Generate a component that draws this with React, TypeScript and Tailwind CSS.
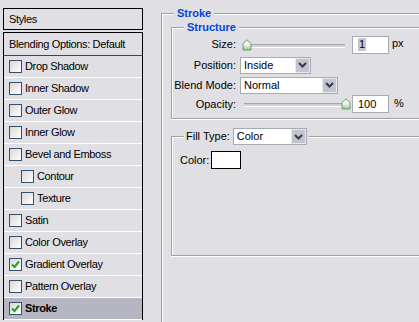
const FONT = "font-['Liberation_Sans',Arial,sans-serif]";

const STYLES = [
  { label: "Drop Shadow" },
  { label: "Inner Shadow" },
  { label: "Outer Glow" },
  { label: "Inner Glow" },
  { label: "Bevel and Emboss" },
  { label: "Contour", indent: true },
  { label: "Texture", indent: true },
  { label: "Satin" },
  { label: "Color Overlay" },
  { label: "Gradient Overlay", checked: true },
  { label: "Pattern Overlay" },
  { label: "Stroke", checked: true, selected: true },
];

function Check({ checked }: { checked?: boolean }) {
  return (
    <span className="flex h-[13px] w-[13px] shrink-0 items-center justify-center border border-[#34506c] bg-gradient-to-br from-[#d8d8d4] to-white">
      {checked && (
        <svg width="9" height="9" viewBox="0 0 9 9">
          <path d="M1 4.5 L3.5 7 L8 1.5" fill="none" stroke="#21a121" strokeWidth="2" />
        </svg>
      )}
    </span>
  );
}

function Arrow() {
  return (
    <span className="flex h-[15px] w-[15px] items-center justify-center border border-[#e8e8ee] bg-[#c4c4ce]">
      <svg width="9" height="6" viewBox="0 0 9 6">
        <path d="M1 1 L4.5 4.5 L8 1" fill="none" stroke="#2d3a55" strokeWidth="2" />
      </svg>
    </span>
  );
}

function Select({ value, className }: { value: string; className: string }) {
  return (
    <div className={`flex h-[17px] items-center justify-between border border-[#a5acb5] bg-white pl-[3px] ${className}`}>
      <span>{value}</span>
      <Arrow />
    </div>
  );
}

function Thumb() {
  return (
    <svg width="10" height="12" viewBox="0 0 10 12">
      <defs>
        <linearGradient id="tg" x1="0" y1="0" x2="0" y2="1">
          <stop offset="0" stopColor="#ffffff" />
          <stop offset="0.55" stopColor="#e6f2e6" />
          <stop offset="1" stopColor="#7fcf7f" />
        </linearGradient>
      </defs>
      <path d="M1 4.5 L5 0.8 L9 4.5 V11 H1 Z" fill="url(#tg)" stroke="#7c8f7c" strokeWidth="1" />
    </svg>
  );
}

function Slider({ pct }: { pct: number }) {
  return (
    <div className="relative h-[12px] w-[106px]">
      <div className="absolute left-[4px] right-[1px] top-[5px] h-[3px] border-t border-[#a8a8b0] bg-[#d0d0d6] shadow-[0_1px_0_#fff]" />
      <div className="absolute top-0" style={{ left: `${Math.round(pct * 99) + 2}px` }}>
        <Thumb />
      </div>
    </div>
  );
}

function NumBox({ children }: { children: React.ReactNode }) {
  return (
    <div className="ml-[6px] flex h-[18px] w-[37px] items-center border border-[#a5acb5] bg-white pl-[5px]">
      {children}
    </div>
  );
}

export default function App() {
  return (
    <div className={`flex h-[322px] w-[419px] overflow-hidden bg-[#e0dfe3] text-[11px] leading-[13px] text-black ${FONT}`}>
      {/* Styles list */}
      <div className="w-[143px] shrink-0 pl-[3px] pt-[8px] tracking-[-0.35px]">
        <div className="flex h-[22px] items-center border border-black pl-[5px]">Styles</div>
        <div className="mt-[2px] border-x border-t border-black">
          <div className="flex h-[23px] items-center border-b border-[#444] pl-[5px]">Blending Options: Default</div>
          {STYLES.map((s) => (
            <div
              key={s.label}
              className={`flex h-[22px] items-center border-b border-white ${s.indent ? "pl-[17px]" : "pl-[5px]"} ${
                s.selected ? "bg-[#b6b6c2] font-bold" : ""
              }`}
            >
              <Check checked={s.checked} />
              <span className="ml-[3px]">{s.label}</span>
            </div>
          ))}
        </div>
      </div>

      {/* Stroke settings */}
      <div className="ml-[18px] flex-1 pt-[7px]">
        <fieldset className="h-[330px] border-l border-t border-[#a0a0a0] shadow-[inset_1px_1px_0_#fff]">
          <legend className="ml-3 bg-[#e0dfe3] px-[3px] font-bold text-[#0046d5]">Stroke</legend>

          <fieldset className="ml-[9px] mt-px border-y border-l border-[#a0a0a0] pb-[5px] shadow-[inset_1px_1px_0_#fff,0_1px_0_#fff]">
            <legend className="ml-3 bg-[#e0dfe3] px-[3px] font-bold text-[#0046d5]">Structure</legend>
            <div className="flex h-[21px] items-center">
              <span className="w-[64px] text-right">Size:</span>
              <span className="ml-[4px] flex">
                <Slider pct={0} />
              </span>
              <NumBox>
                <span className="bg-[#c6c6ce] px-px">1</span>
              </NumBox>
              <span className="ml-[3px] -mt-[2px]">px</span>
            </div>
            <div className="flex h-[20px] items-center">
              <span className="w-[64px] text-right">Position:</span>
              <Select value="Inside" className="ml-[4px] w-[71px]" />
            </div>
            <div className="flex h-[20px] items-center">
              <span className="w-[64px] text-right">Blend Mode:</span>
              <Select value="Normal" className="ml-[4px] w-[98px]" />
            </div>
            <div className="flex h-[18px] items-center">
              <span className="w-[64px] text-right">Opacity:</span>
              <span className="ml-[4px] flex">
                <Slider pct={1} />
              </span>
              <NumBox>100</NumBox>
              <span className="ml-[5px] -mt-[2px]">%</span>
            </div>
          </fieldset>

          <fieldset className="ml-[9px] mt-[9px] border-y border-l border-[#a0a0a0] pb-[86px] pt-[6px] shadow-[inset_1px_1px_0_#fff,0_1px_0_#fff]">
            <legend className="ml-3 bg-[#e0dfe3] px-[2px]">
              <div className="flex items-center">
                <span className="mr-[3px]">Fill Type:</span>
                <Select value="Color" className="w-[74px]" />
              </div>
            </legend>
            <div className="flex h-[18px] items-center pl-[8px]">
              <span>Color:</span>
              <span className="ml-[2px] h-[18px] w-[30px] border border-black bg-white" />
            </div>
          </fieldset>
        </fieldset>
      </div>
    </div>
  );
}
